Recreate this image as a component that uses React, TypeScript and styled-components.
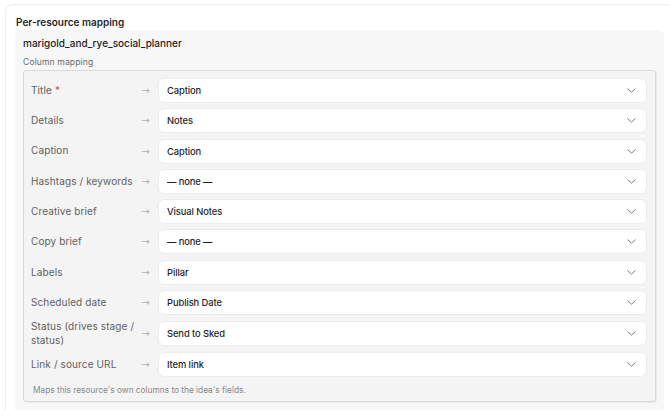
import React from "react";
import styled, { createGlobalStyle } from "styled-components";

const GlobalStyle = createGlobalStyle`
    html, body {
        margin: 0;
        padding: 0;
        background: #ffffff;
        overflow: hidden;
    }
    body {
        font-family: Inter, "Noto Sans", "Liberation Sans", sans-serif;
        -webkit-font-smoothing: antialiased;
    }
`;

type Mapping = {
    field: string;
    required?: boolean;
    value: string;
};

const mappings: Mapping[] = [
    { field: "Title", required: true, value: "Caption" },
    { field: "Details", value: "Notes" },
    { field: "Caption", value: "Caption" },
    { field: "Hashtags / keywords", value: "— none —" },
    { field: "Creative brief", value: "Visual Notes" },
    { field: "Copy brief", value: "— none —" },
    { field: "Labels", value: "Pillar" },
    { field: "Scheduled date", value: "Publish Date" },
    { field: "Status (drives stage / status)", value: "Send to Sked" },
    { field: "Link / source URL", value: "Item link" },
];

const Page = styled.div`
    padding: 4px 0 0 5px;
`;

const Card = styled.section`
    width: 669px;
    box-sizing: border-box;
    border: 1px solid #efefef;
    border-radius: 8px;
    padding: 11px 9px 20px 9px;
    background: #ffffff;
`;

const Heading = styled.h3`
    margin: 0 0 2px 1px;
    font-size: 10px;
    font-weight: 600;
    line-height: 12px;
    color: #1f1f1f;
`;

const Panel = styled.div`
    background: #f7f7f7;
    border-radius: 6px;
    padding: 7px 7px 20px 8px;
`;

const ResourceName = styled.div`
    font-size: 10px;
    font-weight: 500;
    line-height: 12px;
    color: #222222;
    margin-bottom: 8px;
`;

const SectionLabel = styled.div`
    font-size: 8.6px;
    line-height: 10px;
    color: #6b6b6b;
    letter-spacing: 0.1px;
    margin-bottom: 3px;
`;

const MappingBox = styled.div`
    border: 1px solid #d9d9d9;
    box-shadow: 1px 1px 0 #ebebeb;
    border-radius: 3px;
    background: #f4f4f4;
    padding: 7px 8px 6px 7px;
    margin-right: 1px;
`;

const Grid = styled.div`
    display: grid;
    grid-template-columns: 108px 19px 1fr;
    row-gap: 5.3px;
    align-items: center;
`;

const FieldLabel = styled.span`
    font-size: 10px;
    line-height: 13.3px;
    letter-spacing: 0.12px;
    color: #616161;
`;

const Required = styled.span`
    color: #e5484d;
    margin-left: 3px;
`;

const Arrow = styled.span`
    font-family: "DejaVu Sans", sans-serif;
    font-size: 10px;
    color: #b0b0b0;
    text-align: center;
    padding-right: 6px;
`;

const Select = styled.div`
    height: 25px;
    box-sizing: border-box;
    display: flex;
    align-items: center;
    justify-content: space-between;
    background: #ffffff;
    border: 1px solid #ececec;
    border-radius: 6px;
    padding: 0 10px 0 8px;
    font-size: 9.4px;
    font-weight: 500;
    letter-spacing: -0.1px;
    color: #1f1f1f;
`;

const Footnote = styled.p`
    margin: 8px 0 0 2px;
    font-size: 8.3px;
    line-height: 10px;
    color: #888888;
`;

function Chevron() {
    return (
        <svg width="9" height="5" viewBox="0 0 9 5" fill="none">
            <path
                d="M0.8 0.8l3.7 3.4 3.7-3.4"
                stroke="#7a7a7a"
                strokeWidth="1"
                strokeLinecap="round"
                strokeLinejoin="round"
            />
        </svg>
    );
}

export default function App() {
    return (
        <>
            <GlobalStyle />
            <Page>
                <Card>
                    <Heading>Per-resource mapping</Heading>
                    <Panel>
                        <ResourceName>marigold_and_rye_social_planner</ResourceName>
                        <SectionLabel>Column mapping</SectionLabel>
                        <MappingBox>
                            <Grid>
                                {mappings.map((m) => (
                                    <React.Fragment key={m.field}>
                                        <FieldLabel>
                                            {m.field}
                                            {m.required ? <Required>*</Required> : null}
                                        </FieldLabel>
                                        <Arrow>→</Arrow>
                                        <Select>
                                            <span>{m.value}</span>
                                            <Chevron />
                                        </Select>
                                    </React.Fragment>
                                ))}
                            </Grid>
                            <Footnote>Maps this resource's own columns to the idea's fields.</Footnote>
                        </MappingBox>
                    </Panel>
                </Card>
            </Page>
        </>
    );
}
